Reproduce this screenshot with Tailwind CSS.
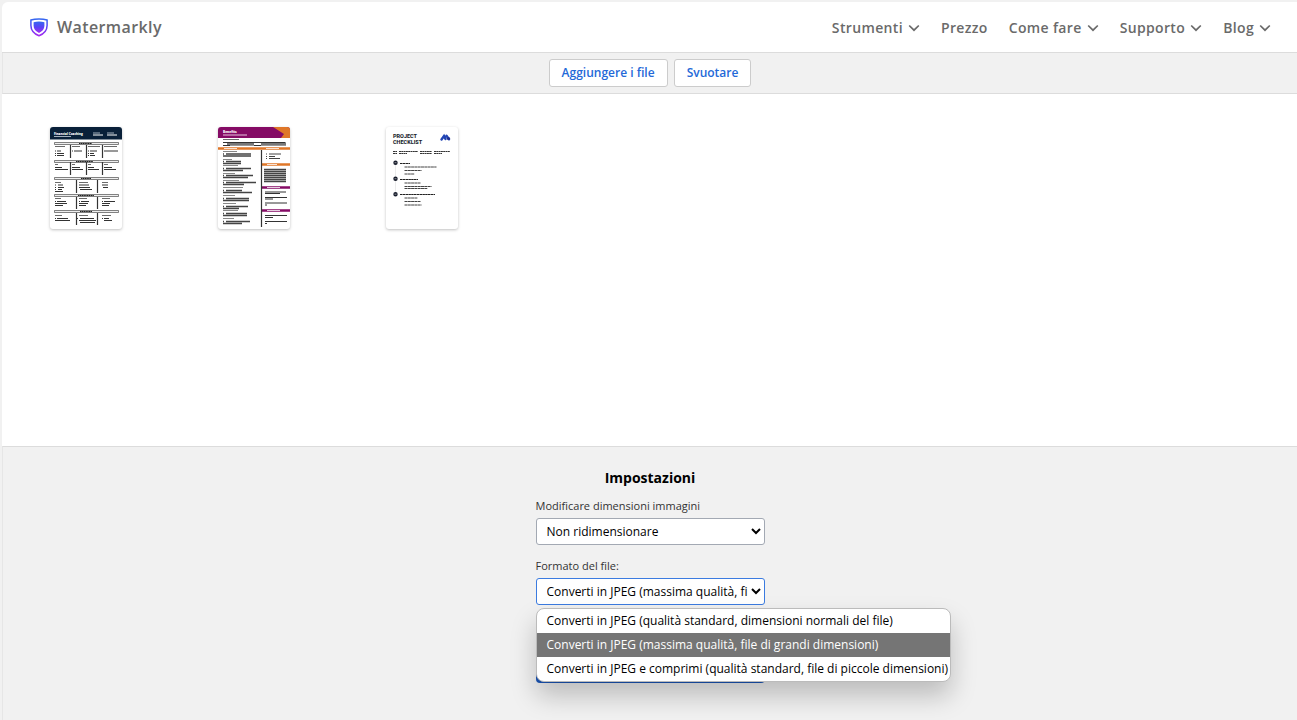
<!DOCTYPE html>
<html lang="it">
  <head>
    <meta charset="UTF-8" />
    <meta name="viewport" content="width=device-width, initial-scale=1.0" />
    <title>Watermarkly</title>
    <script src="https://cdn.jsdelivr.net/npm/@tailwindcss/browser@4"></script>
  </head>

  <body class="bg-[#f1f1f1] pt-[2px] pl-[2px] font-['Open_Sans',sans-serif] text-black">
    <div class="flex min-h-[calc(100vh-2px)] flex-col">
      <header class="flex h-[51px] items-center justify-between rounded-tl-md border-b border-[#dcdcdc] bg-white pr-[26px] pl-7 text-[#6a6a6a]">
        <a href="#" class="flex items-center gap-[9px] text-[16px] font-semibold tracking-wide">
          <svg class="h-[19px] w-[18px]" viewBox="0 0 18 19" fill="none">
            <defs>
              <linearGradient id="shield" x1="0" y1="0" x2="0" y2="1">
                <stop offset="0" stop-color="#3568f0" />
                <stop offset="0.5" stop-color="#5b42f5" />
                <stop offset="1" stop-color="#a52bf0" />
              </linearGradient>
            </defs>
            <path d="M9 .9C6.200 .9 3.400 1.200 .9 2v5.400c0 4.800 3 8.200 8.100 10.400 5.100-2.200 8.100-5.600 8.100-10.400V2C14.600 1.200 11.800.9 9 .9Z" stroke="url(#shield)" stroke-width="1.500" />
            <path d="M9 3.600c-1.900 0-3.800.2-5.400.6v3.500c0 3.200 2 5.600 5.400 7.200 3.400-1.600 5.400-4 5.400-7.200V4.200c-1.600-.4-3.500-.6-5.400-.6Z" fill="url(#shield)" />
          </svg>
          Watermarkly
        </a>
        <nav class="flex items-center gap-[21px] text-[14px] font-semibold tracking-wide">
          <a href="#" class="flex items-center gap-[5px]">Strumenti
            <svg class="h-3 w-3" viewBox="0 0 12 12" fill="none" stroke="currentColor" stroke-width="1.700"><path d="M1.200 4.500L6 9.200l4.800-4.700" /></svg>
          </a>
          <a href="#">Prezzo</a>
          <a href="#" class="flex items-center gap-[5px]">Come fare
            <svg class="h-3 w-3" viewBox="0 0 12 12" fill="none" stroke="currentColor" stroke-width="1.700"><path d="M1.200 4.500L6 9.200l4.800-4.700" /></svg>
          </a>
          <a href="#" class="flex items-center gap-[5px]">Supporto
            <svg class="h-3 w-3" viewBox="0 0 12 12" fill="none" stroke="currentColor" stroke-width="1.700"><path d="M1.200 4.500L6 9.200l4.800-4.700" /></svg>
          </a>
          <a href="#" class="flex items-center gap-[5px]">Blog
            <svg class="h-3 w-3" viewBox="0 0 12 12" fill="none" stroke="currentColor" stroke-width="1.700"><path d="M1.200 4.500L6 9.200l4.800-4.700" /></svg>
          </a>
        </nav>
      </header>

      <div class="flex h-[41px] items-center justify-center gap-[6px] border-b border-l border-[#dcdcdc] border-l-[#e6e6e6] text-[12px] font-semibold text-[#2469d8]">
        <button class="h-7 rounded-[3px] border border-[#ccc] bg-white px-3">Aggiungere i file</button>
        <button class="h-7 rounded-[3px] border border-[#ccc] bg-white px-3">Svuotare</button>
      </div>

      <main class="flex flex-1 flex-wrap content-start gap-24 bg-white px-12 py-[33px]">
        <svg class="h-[102px] w-[72px] rounded-[3px] bg-white shadow-[0_1px_3px_rgba(0,0,0,0.25)]" viewBox="0 0 72 102" fill="none" font-family="Open Sans" font-weight="800">
          <path fill="#092039" d="M0 0h72v12.500H0z" />
          <text x="4" y="7.500" font-size="3" fill="#fff">Financial Coaching</text>
          <path stroke="#cbd5df" stroke-width=".8" d="M4 9.500h17M43 6h7M57 6h7" />
          <path stroke="#fff" stroke-width="1" d="M43 8h10M57 8h10" />
          <path stroke="#333" stroke-width=".6" d="M4.500 15.500h64v2h-64zM4.500 33.500h64v2h-64zM4.500 50.500h64v2h-64zM4.500 67.500h64v2h-64zM4.500 83.500h64v2h-64z" fill="#eee" />
          <path stroke="#222" stroke-width="1" stroke-dasharray="1.500 .3" d="M29 16.500h13M26 34.500h17M31 51.500h10M28 68.500h16M30 84.500h12" />
          <path stroke="#333" stroke-width="1.200" d="M20.500 18v13M36.500 18v13M52.500 18v13M20.500 35v13M36.500 35v13M52.500 35v13M26.500 53v13M47.500 53v13M26.500 70v12M47.500 70v12M26.500 86v12M47.500 86v12" />
          <path stroke="#444" stroke-width=".8" d="M5 19.500h10M22 19.500h8M38 19.500h12M54 19.500h13M5 37.500h3M22 37.500h3M38 37.500h3M54 37.500h4M5 55.500h6M29 55.500h9M52 55.500h6M5 71.500h6M29 71.500h8M52 71.500h8M5 88.500h7M29 88.500h9M52 88.500h9" />
          <path stroke="#333" stroke-width="1" d="M5 24h1M7 24h4M22 24h1M24 24h8M38 24h1M40 24h7M54 24h14M5 26.500h1M7 26.500h7M38 26.500h1M40 26.500h4M5 28.500h1M7 28.500h7M38 28.500h1M40 28.500h5M5 40.500h7M22 40.500h8M38 40.500h6M54 40.500h8M5 42.500h13M22 42.500h11M38 42.500h11M54 42.500h12M5 58h1M8 58h5M29 58h10M52 58h6M5 60.500h1M8 60.500h6M29 60.500h11M53 60.500h5M5 62.500h1M8 62.500h4M30 62.500h12M5 64.500h8M5 74.500h1M7 74.500h9M29 74.500h1M31 74.500h8M52 74.500h1M54 74.500h11M5 76.500h12M29 76.500h9M52 76.500h8M5 78.500h8M29 78.500h7M52 78.500h7M5 91.500h1M7 91.500h11M27 91.500h1M30 91.500h14M52 91.500h1M54 91.500h5M5 93.500h15M29 93.500h17M54 93.500h8M30 95.500h15" />
        </svg>

        <svg class="h-[102px] w-[72px] rounded-[3px] bg-white shadow-[0_1px_3px_rgba(0,0,0,0.25)]" viewBox="0 0 72 102" fill="none" font-family="Open Sans" font-weight="800">
          <path fill="#850b65" d="M0 0h72v11H0z" />
          <path fill="#df7728" d="M55 0h17v11h-9l3-4z" />
          <text x="5" y="6" font-size="3.200" fill="#fff">Benefits</text>
          <path stroke="#e8c7df" stroke-width="1" d="M5 8h24" />
          <path stroke="#444" stroke-width=".8" d="M5 12.500h16" />
          <path stroke="#777" stroke-width="3.500" d="M9 17h27M43 17h25" />
          <path stroke="#333" stroke-width="1" d="M5 15.500h62M5 18.500h7M36 18.500h7" />
          <path stroke="#df7728" stroke-width="2.500" d="M0 21.500h72M44 37.500h28" />
          <path stroke="#850b65" stroke-width="2.500" d="M44 60.500h28M44 83.500h28" />
          <path stroke="#fff" stroke-width=".8" d="M6 21.500h13M48 21.500h13M49 37.500h10M49 60.500h13M49 83.500h13" />
          <path stroke="#333" stroke-width="1.200" d="M43.500 23v77" />
          <path stroke="#555" stroke-width=".7" d="M5 24.500h14M5 32.500h9M5 38.500h15M5 46.500h12M5 53.500h16M5 60.500h20M5 68.500h12M5 76.500h13M5 83.500h15M5 91.500h11" />
          <path stroke="#444" stroke-width="1.300" d="M5 27h1M8 27h25M5 29h28M5 34.500h1M8 34.500h15M5 36.500h18M5 41.500h1M8 41.500h25M5 43.500h20M5 48.500h1M8 48.500h27M5 50.500h25M5 55.500h1M8 55.500h30M5 57.500h21M5 63.500h1M8 63.500h16M5 65.500h29M5 71.500h1M8 71.500h23M5 73.500h26M5 79.500h1M8 79.500h22M5 81.500h16M5 86.500h1M8 86.500h21M5 88.500h24M5 94.500h1M8 94.500h24M5 96.500h19" />
          <path stroke="#444" stroke-width="1" d="M48 27h1M51 27h12M48 29.500h1M51 29.500h6M48 31.500h1M51 31.500h11" />
          <path stroke="#444" stroke-width="1.400" d="M46 42.500h22M46 44.500h22M46 46.500h22M46 48.500h22M46 50.500h22M46 52.500h22M46 54.500h22" />
          <path stroke="#333" stroke-width="1" d="M47 65h21M47 66.500h15M47 70.500h22M47 72h8M47 76h22M47 78h2M47 88.500h22M47 90.500h8M47 94.500h22M47 96.500h2" />
        </svg>

        <svg class="h-[102px] w-[72px] rounded-[3px] bg-white shadow-[0_1px_3px_rgba(0,0,0,0.25)]" viewBox="0 0 72 102" fill="none" font-family="Roboto" font-weight="800">
          <text x="7" y="10.500" font-size="5.500" fill="#171c2b">PROJECT</text>
          <text x="7" y="16.500" font-size="5.500" fill="#171c2b">CHECKLIST</text>
          <path stroke="#2346b5" stroke-width="2.400" stroke-linecap="round" d="M55.500 12.500l2.500-3.500 1.500 3M60.500 8.800l2.500 3.500" />
          <circle cx="62.500" cy="11.500" r="1.600" fill="#1f2f90" />
          <path stroke="#333" stroke-width="1" stroke-dasharray="2 .3" d="M7 24.500h4M13 24.500h19M34 24.500h12M48 24.500h16M7 26.500h4M13 26.500h8M34 26.500h12M48 26.500h8" />
          <path stroke="#ddd" stroke-width=".6" d="M9.500 36v32" />
          <path fill="#171c2b" d="M9.500 33.500a2.200 2.200 0 1 1 0 4.400 2.200 2.200 0 0 1 0-4.400ZM9.500 49.500a2.200 2.200 0 1 1 0 4.400 2.200 2.200 0 0 1 0-4.400ZM9.500 65a2.200 2.200 0 1 1 0 4.400 2.200 2.200 0 0 1 0-4.400Z" />
          <path stroke="#fff" stroke-width=".5" d="M8.500 35.700h2M8.500 51.700h2M8.500 67.200h2" />
          <path stroke="#222" stroke-width="1" stroke-dasharray="2.500 .3" d="M14 36.500h10M14 52.500h18M14 67.500h35" />
          <path stroke="#444" stroke-width="1" stroke-dasharray="3 .3" d="M18.500 40h32M18.500 43.500h17M18.500 47h10M18.500 56h16M18.500 59.500h27M18.500 61.500h23M18.500 71h13M18.500 74.500h16M18.500 78h17" />
        </svg>
      </main>

      <section class="border-t border-l border-[#dcdcdc] border-l-[#e6e6e6] px-4 pt-[19px] pb-[37px]">
        <h2 class="text-center text-[14px] leading-6 font-bold">Impostazioni</h2>
        <form class="mx-auto w-[229px]">
          <label for="resize" class="mt-2 block text-[11px] leading-4 text-[#333]">Modificare dimensioni immagini</label>
          <select id="resize" class="mt-1 block h-[27px] w-full rounded-[3px] border border-[#a3a9b3] bg-white pl-[6px] text-[12px]">
            <option>Non ridimensionare</option>
          </select>
          <label for="format" class="mt-[13px] block text-[11px] leading-4 text-[#333]">Formato del file:</label>
          <div class="relative mt-1">
            <select id="format" class="block h-[27px] w-full rounded-[3px] border border-[#3b7be0] bg-white pl-[6px] text-[12px]">
              <option>Converti in JPEG (massima qualità, file di grandi dimensioni)</option>
            </select>
            <ul role="listbox" aria-label="Formato del file" class="absolute top-full left-0 mt-[3px] overflow-hidden rounded-lg border border-[#bbb] bg-white text-[12px] leading-6 whitespace-nowrap shadow-[0_14px_26px_rgba(0,0,0,0.22)]">
              <li role="option" class="pr-[2px] pl-[10px]">Converti in JPEG (qualità standard, dimensioni normali del file)</li>
              <li role="option" aria-selected="true" class="bg-[#757575] pr-[2px] pl-[10px] text-white">Converti in JPEG (massima qualità, file di grandi dimensioni)</li>
              <li role="option" class="pr-[2px] pl-[10px]">Converti in JPEG e comprimi (qualità standard, file di piccole dimensioni)</li>
            </ul>
          </div>
          <button type="button" aria-label="Converti" class="mt-[42px] block h-9 w-full rounded-[4px] bg-[#1b56b8]"></button>
        </form>
      </section>
    </div>
  </body>
</html>
